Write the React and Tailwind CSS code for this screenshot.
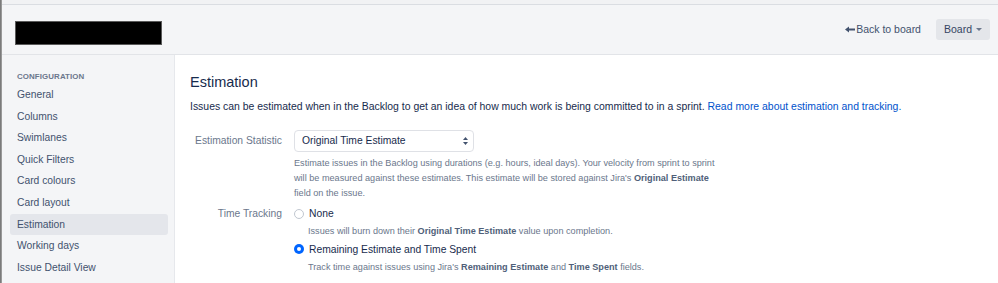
const menu = [
  'General',
  'Columns',
  'Swimlanes',
  'Quick Filters',
  'Card colours',
  'Card layout',
  'Estimation',
  'Working days',
  'Issue Detail View',
];

const BackArrow = () => (
  <svg width="10" height="7" viewBox="0 0 10 7" className="mr-[1px]">
    <path d="M0 3.5 L4 0.5 L4 6.5 Z" fill="#42526e" />
    <rect x="3.5" y="2.5" width="6.5" height="2" fill="#42526e" />
  </svg>
);

const Radio = ({ checked }) =>
  checked ? (
    <span className="w-[10px] h-[10px] rounded-full bg-[#0065ff] flex items-center justify-center">
      <span className="w-[4px] h-[4px] rounded-full bg-white" />
    </span>
  ) : (
    <span className="w-[10px] h-[10px] rounded-full border border-[#c1c7d0] bg-white" />
  );

const App = () => {
  return (
    <div className="w-[998px] h-[283px] overflow-hidden flex bg-white font-['Liberation_Sans',Arial,sans-serif]">
      {/* window edge */}
      <div className="w-[2px] shrink-0 bg-gradient-to-r from-[#6d6d6d] to-[#a8a8a8]" />

      <div className="flex-1 flex flex-col">
        <div className="h-[5px] bg-[#f1f2f4] border-b border-[#dadde2]" />

        {/* Header */}
        <header className="h-[50px] bg-[#f4f5f7] border-b border-[#e2e4e8] flex items-start justify-between pl-[13px] pr-[8px]">
          <div className="mt-[16px] w-[147px] h-[24px] bg-black border border-[#5a5a5a]" />
          <div className="flex items-center mt-[14px] gap-[15px]">
            <a className="flex items-center text-[10.5px] text-[#42526e]">
              <BackArrow />
              Back to board
            </a>
            <button className="h-[21px] px-[8px] rounded-[3px] bg-[#e4e6ea] text-[10.5px] text-[#344563] flex items-center gap-[4px]">
              Board
              <svg width="6" height="3" viewBox="0 0 6 3">
                <path d="M0 0 L6 0 L3 3 Z" fill="#6b778c" />
              </svg>
            </button>
          </div>
        </header>

        <div className="flex-1 flex">
          {/* Sidebar */}
          <aside className="w-[173px] shrink-0 bg-[#f4f5f7] border-r border-[#e6e8ec] pt-[17px]">
            <div className="pl-[15px] text-[7.9px] leading-[10px] font-bold text-[#6b778c] tracking-[0.1px] mb-[2px]">
              CONFIGURATION
            </div>
            <nav className="flex flex-col">
              {menu.map((item) => (
                <div
                  key={item}
                  className={`ml-[8px] mr-[6px] h-[21.6px] pl-[7px] flex items-center rounded-[3px] text-[10.3px] text-[#42526e] ${
                    item === 'Estimation' ? 'bg-[#e4e6eb]' : ''
                  }`}
                >
                  {item}
                </div>
              ))}
            </nav>
          </aside>

          {/* Main */}
          <main className="flex-1 pl-[15px] pt-[18px] text-[#172b4d]">
            <h2 className="text-[14.5px] leading-[18px] font-medium">Estimation</h2>
            <p className="mt-[8.5px] text-[10.45px] leading-[14px]">
              Issues can be estimated when in the Backlog to get an idea of how much work is being committed to in a sprint.{' '}
              <a className="text-[#0052cc]">Read more about estimation and tracking.</a>
            </p>

            <div className="mt-[16.5px] flex gap-[12px]">
              <div className="w-[92px] text-right text-[10.3px] text-[#6b778c] leading-[22px]">Estimation Statistic</div>
              <div>
                <div className="w-[180px] h-[22px] border border-[#dfe1e6] rounded-[4px] bg-white flex items-center justify-between pl-[7px] pr-[5px]">
                  <span className="text-[10.3px] font-medium text-[#172b4d]">Original Time Estimate</span>
                  <svg width="5" height="8" viewBox="0 0 5 8">
                    <path d="M0 3 L2.5 0 L5 3 Z" fill="#42526e" />
                    <path d="M0 5 L2.5 8 L5 5 Z" fill="#42526e" />
                  </svg>
                </div>
                <p className="mt-[3.5px] text-[9.15px] leading-[15px] text-[#6b778c]">
                  Estimate issues in the Backlog using durations (e.g. hours, ideal days). Your velocity from sprint to sprint
                  <br />
                  will be measured against these estimates. This estimate will be stored against Jira's{' '}
                  <b className="text-[#505f79]">Original Estimate</b>
                  <br />
                  field on the issue.
                </p>
              </div>
            </div>

            <div className="mt-[6.5px] flex gap-[12px]">
              <div className="w-[92px] text-right text-[10.3px] text-[#6b778c] leading-[14px]">Time Tracking</div>
              <div>
                <label className="h-[14px] flex items-center gap-[5px] text-[10.3px] text-[#172b4d]">
                  <Radio />
                  None
                </label>
                <p className="mt-[3px] pl-[14px] text-[9.15px] leading-[14px] text-[#6b778c]">
                  Issues will burn down their <b className="text-[#505f79]">Original Time Estimate</b> value upon completion.
                </p>
                <label className="mt-[4.3px] h-[14px] flex items-center gap-[5px] text-[10.3px] text-[#172b4d]">
                  <Radio checked />
                  Remaining Estimate and Time Spent
                </label>
                <p className="mt-[3.4px] pl-[14px] text-[9.15px] leading-[14px] text-[#6b778c]">
                  Track time against issues using Jira's <b className="text-[#505f79]">Remaining Estimate</b> and{' '}
                  <b className="text-[#505f79]">Time Spent</b> fields.
                </p>
              </div>
            </div>
          </main>
        </div>
      </div>
    </div>
  );
};

export default App;
